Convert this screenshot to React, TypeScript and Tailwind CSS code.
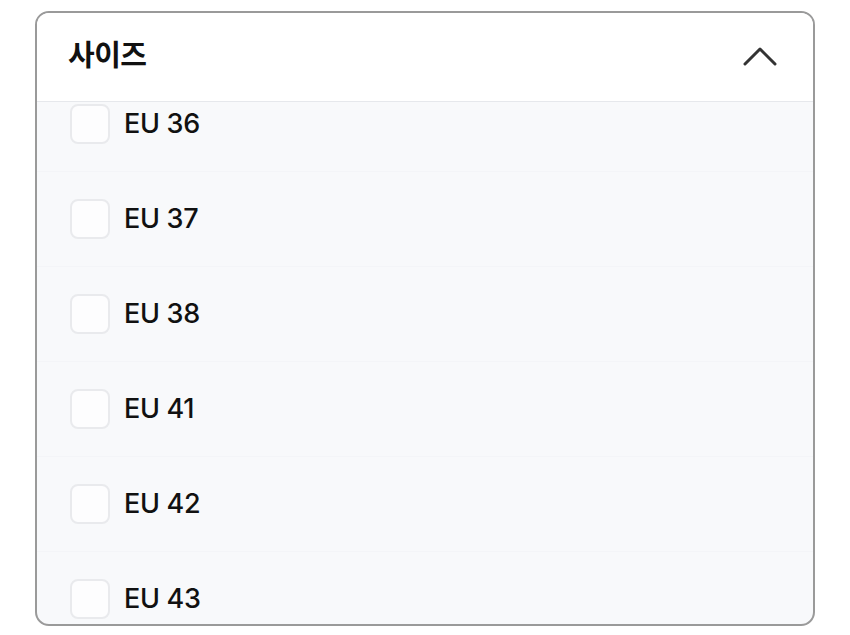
const SIZES = ['EU 36', 'EU 37', 'EU 38', 'EU 41', 'EU 42', 'EU 43']

export default function App() {
  return (
    <div className="h-[635px] w-[850px] bg-white pt-[11px] pl-[35px]" style={{ fontFamily: 'Inter, "Noto Sans CJK KR", sans-serif' }}>
      <div className="flex h-[615px] w-[780px] flex-col overflow-hidden rounded-[14px] border-2 border-[#9a9a9a] bg-[#f8f9fb]">
        {/* header */}
        <div className="flex h-[89px] shrink-0 items-center justify-between border-b border-[#e6e8ec] bg-white pr-[36px] pb-[6px] pl-[31px]">
          <h2 className="text-[29px] font-bold tracking-[-0.5px] text-[#111]" style={{ fontFamily: '"Noto Sans CJK KR", sans-serif' }}>
            사이즈
          </h2>
          <svg width="34" height="20" viewBox="0 0 34 20" fill="none" className="mt-[4px] text-[#333]">
            <polyline points="2,18 17,3 32,18" stroke="currentColor" strokeWidth="3" strokeLinecap="round" strokeLinejoin="round" />
          </svg>
        </div>

        {/* list, scrolled a bit */}
        <div className="flex-1 overflow-hidden">
          <div className="mt-[-25px]">
            {SIZES.map((size) => (
              <label
                key={size}
                className="flex h-[95px] items-center gap-[14px] border-b border-[#f4f5f8] pl-[33px]"
              >
                <span className="h-[40px] w-[40px] rounded-[8px] border-2 border-[#e9eaed] bg-[#fdfdfe]" />
                <span className="text-[27px] font-medium tracking-[-0.3px] text-[#111]">{size}</span>
              </label>
            ))}
          </div>
        </div>
      </div>
    </div>
  )
}
